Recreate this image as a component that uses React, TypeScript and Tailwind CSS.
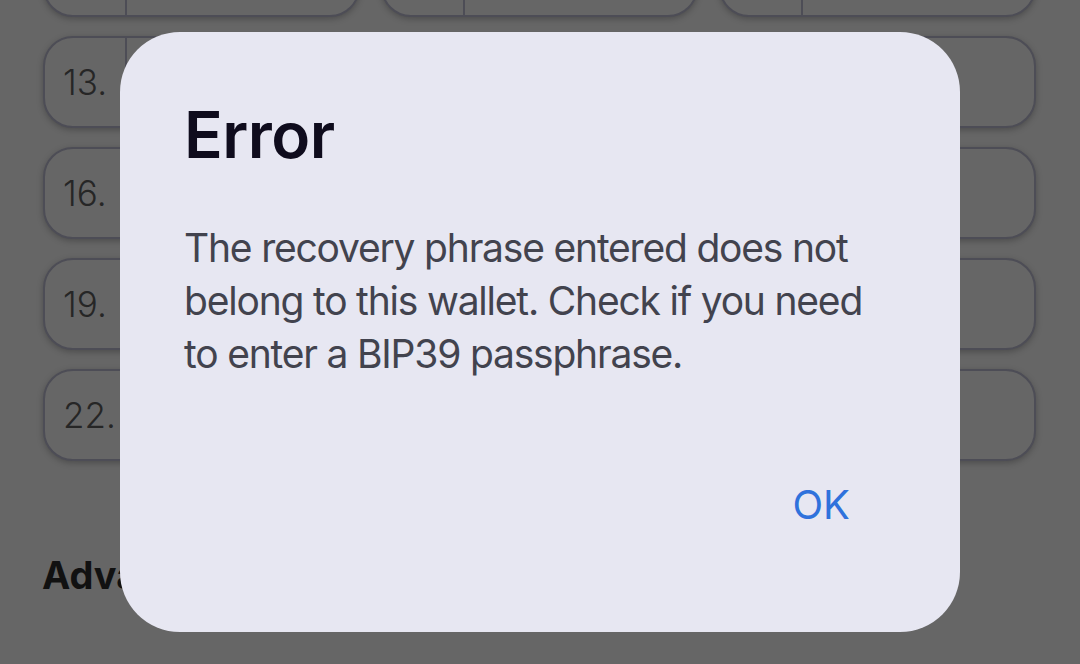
const rows = [10, 13, 16, 19, 22];

function WordCell({ n }: { n: number | null }) {
  return (
    <div className="flex h-[92px] items-stretch rounded-[30px] border-2 border-[#4d4d56] bg-[#666666] shadow-[0_2px_6px_rgba(0,0,0,0.25)]">
      <div className="flex w-[82px] items-center border-r-2 border-[#4d4d56] pl-[18px] text-[35px] font-light text-[#262626]">
        {n !== null ? `${n}.` : ""}
      </div>
      <div className="flex-1" />
    </div>
  );
}

export default function App() {
  return (
    <div
      className="relative h-[664px] w-[1080px] overflow-hidden bg-[#666666]"
      style={{ fontFamily: "Inter, 'Noto Sans', sans-serif" }}
    >
      {/* page behind the scrim */}
      <div className="-mt-[75px] grid grid-cols-3 gap-x-[21px] gap-y-[19px] pl-[43px] pr-[44px]">
        {rows.map((r) =>
          [0, 1, 2].map((c) => <WordCell key={`${r}-${c}`} n={c === 0 && r !== 10 ? r : null} />),
        )}
      </div>
      <h2 className="mt-[95px] pl-[42px] text-[38px] font-bold leading-none text-[#111111]">Advanced</h2>

      {/* dialog */}
      <div className="absolute left-[120px] top-[32px] flex h-[600px] w-[840px] flex-col rounded-[60px] bg-[#e7e7f2] px-[64px] pt-[71px]">
        <h1 className="text-[64px] font-semibold leading-none tracking-[-0.5px] text-[#0f0c1d]">Error</h1>
        <p className="mt-[54px] text-[39px] leading-[53px] tracking-[-1.2px] text-[#42434e]">
          The recovery phrase entered does not belong to this wallet. Check if you need to enter a BIP39 passphrase.
        </p>
        <div className="mt-auto flex justify-end pb-[107px] pr-[46px]">
          <button className="text-[40px] leading-none text-[#2f72dc]">OK</button>
        </div>
      </div>
    </div>
  );
}
